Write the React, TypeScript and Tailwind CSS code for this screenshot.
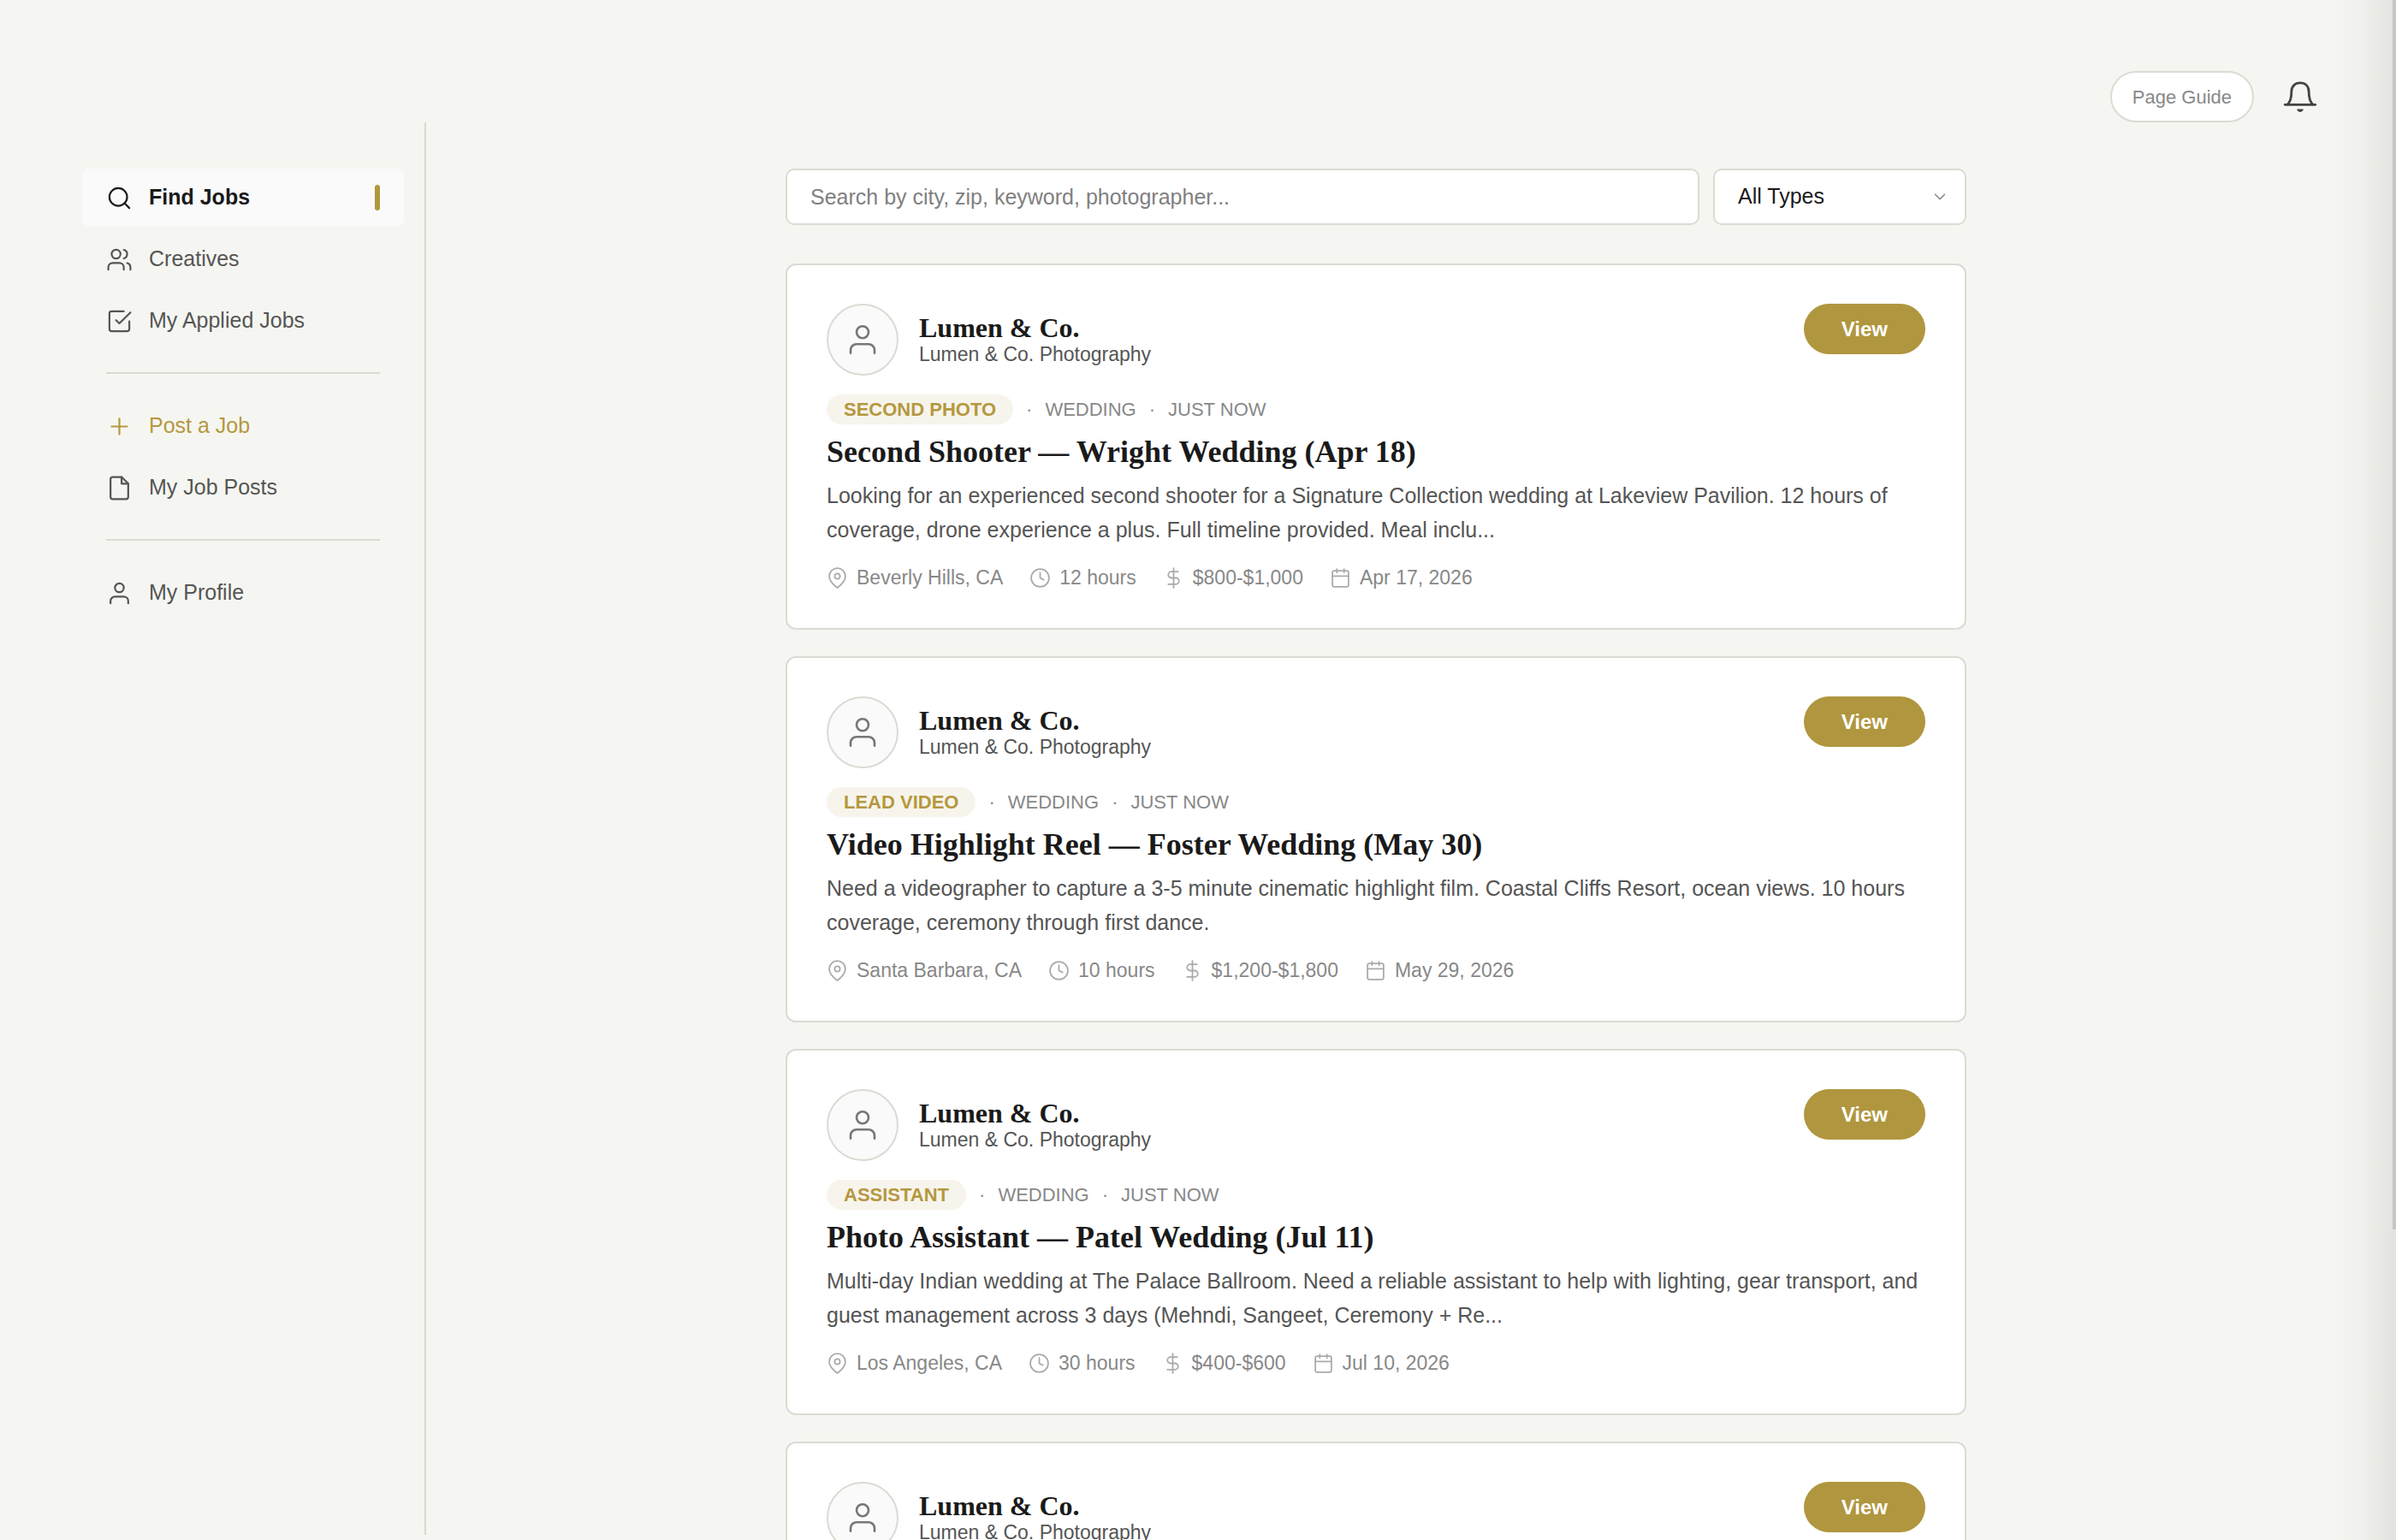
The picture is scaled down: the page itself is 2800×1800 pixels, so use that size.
import type { ReactNode } from 'react';

interface IconProps {
  className?: string;
  strokeWidth?: number;
  children?: ReactNode;
}

function Icon({ className = 'size-[31px]', strokeWidth = 1.7, children }: IconProps) {
  return (
    <svg
      className={`shrink-0 ${className}`}
      viewBox="0 0 24 24"
      fill="none"
      stroke="currentColor"
      strokeWidth={strokeWidth}
      strokeLinecap="round"
      strokeLinejoin="round"
      aria-hidden="true"
    >
      {children}
    </svg>
  );
}

const icons = {
  search: (
    <>
      <circle cx="11" cy="11" r="8" />
      <path d="m21 21-4.3-4.3" />
    </>
  ),
  users: (
    <>
      <path d="M16 21v-2a4 4 0 0 0-4-4H6a4 4 0 0 0-4 4v2" />
      <circle cx="9" cy="7" r="4" />
      <path d="M22 21v-2a4 4 0 0 0-3-3.87M16 3.13a4 4 0 0 1 0 7.75" />
    </>
  ),
  check: (
    <>
      <path d="m9 11 3 3L22 4" />
      <path d="M21 12v7a2 2 0 0 1-2 2H5a2 2 0 0 1-2-2V5a2 2 0 0 1 2-2h11" />
    </>
  ),
  plus: <path d="M12 5v14M5 12h14" />,
  file: (
    <>
      <path d="M14 2H6a2 2 0 0 0-2 2v16a2 2 0 0 0 2 2h12a2 2 0 0 0 2-2V8z" />
      <path d="M14 2v6h6" />
    </>
  ),
  user: (
    <>
      <path d="M20 21v-2a4 4 0 0 0-4-4H8a4 4 0 0 0-4 4v2" />
      <circle cx="12" cy="7" r="4" />
    </>
  ),
  pin: (
    <>
      <path d="M21 10c0 7-9 13-9 13s-9-6-9-13a9 9 0 0 1 18 0z" />
      <circle cx="12" cy="10" r="3" />
    </>
  ),
  clock: (
    <>
      <circle cx="12" cy="12" r="10" />
      <path d="M12 6v6l4 2" />
    </>
  ),
  dollar: <path d="M12 1v22M17 5H9.5a3.5 3.5 0 0 0 0 7h5a3.5 3.5 0 0 1 0 7H6" />,
  calendar: (
    <>
      <rect x="3" y="4" width="18" height="18" rx="2" />
      <path d="M16 2v4M8 2v4M3 10h18" />
    </>
  ),
  bell: (
    <>
      <path d="M3.2 17.4C5.2 15.4 5.9 12.9 5.9 8.7C5.9 4.7 8.3 2.3 12 2.3S18.1 4.7 18.1 8.7C18.1 12.9 18.8 15.4 20.8 17.4" />
      <path d="M1.4 17.6H22.6" />
      <path d="M10.2 21.1H13.8C13.4 21.9 12.8 22.3 12 22.3S10.600 21.900 10.200 21.100Z" fill="currentColor" strokeWidth="0.9" />
    </>
  ),
  chevron: <path d="m6 9 6 6 6-6" />,
};

type IconName = keyof typeof icons;

interface NavItem {
  label: string;
  icon: IconName;
  active?: boolean;
  accent?: boolean;
}

const navGroups: NavItem[][] = [
  [
    { label: 'Find Jobs', icon: 'search', active: true },
    { label: 'Creatives', icon: 'users' },
    { label: 'My Applied Jobs', icon: 'check' },
  ],
  [
    { label: 'Post a Job', icon: 'plus', accent: true },
    { label: 'My Job Posts', icon: 'file' },
  ],
  [{ label: 'My Profile', icon: 'user' }],
];

interface JobDetails {
  role: string;
  title: string;
  description: string;
  location: string;
  hours: string;
  pay: string;
  date: string;
}

interface Job {
  id: number;
  details?: JobDetails;
}

const jobs: Job[] = [
  {
    id: 1,
    details: {
      role: 'SECOND PHOTO',
      title: 'Second Shooter — Wright Wedding (Apr 18)',
      description:
        'Looking for an experienced second shooter for a Signature Collection wedding at Lakeview Pavilion. 12 hours of coverage, drone experience a plus. Full timeline provided. Meal inclu...',
      location: 'Beverly Hills, CA',
      hours: '12 hours',
      pay: '$800-$1,000',
      date: 'Apr 17, 2026',
    },
  },
  {
    id: 2,
    details: {
      role: 'LEAD VIDEO',
      title: 'Video Highlight Reel — Foster Wedding (May 30)',
      description:
        'Need a videographer to capture a 3-5 minute cinematic highlight film. Coastal Cliffs Resort, ocean views. 10 hours coverage, ceremony through first dance.',
      location: 'Santa Barbara, CA',
      hours: '10 hours',
      pay: '$1,200-$1,800',
      date: 'May 29, 2026',
    },
  },
  {
    id: 3,
    details: {
      role: 'ASSISTANT',
      title: 'Photo Assistant — Patel Wedding (Jul 11)',
      description:
        'Multi-day Indian wedding at The Palace Ballroom. Need a reliable assistant to help with lighting, gear transport, and guest management across 3 days (Mehndi, Sangeet, Ceremony + Re...',
      location: 'Los Angeles, CA',
      hours: '30 hours',
      pay: '$400-$600',
      date: 'Jul 10, 2026',
    },
  },
  { id: 4 },
];

function NavLink({ item }: { item: NavItem }) {
  const color = item.active
    ? 'bg-[#fafafa] font-bold text-[#1a1a1a]'
    : item.accent
      ? 'text-[#b5983f]'
      : 'text-[#555]';

  return (
    <a href="#" className={`flex h-[68px] items-center gap-[19px] rounded-lg px-7 text-[25px] ${color}`}>
      <Icon>{icons[item.icon]}</Icon>
      <span className="flex-1">{item.label}</span>
      {/* Active marker */}
      {item.active && <span className="h-[30px] w-1.5 rounded-sm bg-[#b0963e]" />}
    </a>
  );
}

function Sidebar() {
  return (
    <nav className="mb-1.5 w-[498px] shrink-0 border-r-2 border-[#dbd8d1] pt-[54px] pr-6 pl-24">
      {navGroups.map((group, i) => (
        <div key={i}>
          {i > 0 && <hr className="mx-7 mt-[26px] mb-[27px] border-t-2 border-[#dbd8d1]" />}
          <div className="flex flex-col gap-1">
            {group.map((item) => (
              <NavLink key={item.label} item={item} />
            ))}
          </div>
        </div>
      ))}
    </nav>
  );
}

function Meta({ icon, children }: { icon: IconName; children: ReactNode }) {
  return (
    <span className="flex items-center gap-2.5">
      <Icon className="size-[25px] text-[#aaa]">{icons[icon]}</Icon>
      {children}
    </span>
  );
}

function JobBody({ details }: { details: JobDetails }) {
  return (
    <>
      <div className="mt-[22px] flex items-center text-[22px] leading-[35px] text-[#888]">
        <span className="rounded-full bg-[#f7f4ec] px-5 font-bold text-[#b5983f]">{details.role}</span>
        <span className="mx-[15px]">·</span>
        <span>WEDDING</span>
        <span className="mx-[15px]">·</span>
        <span>JUST NOW</span>
      </div>

      <h2 className="mt-3 font-['Liberation_Serif',serif] text-4xl leading-10 font-bold text-[#1a1a1a]">{details.title}</h2>
      <p className="mt-[11px] text-[25px] leading-10 text-[#555]">{details.description}</p>

      <div className="mt-5 flex items-center gap-[31px] text-[23px] leading-8 text-[#888]">
        <Meta icon="pin">{details.location}</Meta>
        <Meta icon="clock">{details.hours}</Meta>
        <Meta icon="dollar">{details.pay}</Meta>
        <Meta icon="calendar">{details.date}</Meta>
      </div>
    </>
  );
}

function JobCard({ job }: { job: Job }) {
  return (
    <article className="rounded-xl border-2 border-[#dddad3] bg-white px-[46px] pt-[45px] pb-[43px]">
      <div className="flex items-start justify-between">
        <div className="flex items-center gap-6">
          <div className="flex size-[84px] items-center justify-center rounded-full border-2 border-[#dddad3] bg-[#fafafa] text-[#777]">
            <Icon className="size-[42px]" strokeWidth={1.5}>{icons.user}</Icon>
          </div>
          <div>
            <p className="font-['Liberation_Serif',serif] text-[32px] leading-[34px] font-bold text-[#1a1a1a]">Lumen & Co.</p>
            <p className="text-[23px] leading-7 text-[#555]">Lumen & Co. Photography</p>
          </div>
        </div>
        <button type="button" className="h-[59px] rounded-full bg-[#b0963e] px-11 text-2xl font-bold text-white">
          View
        </button>
      </div>

      {job.details && <JobBody details={job.details} />}
    </article>
  );
}

export default function App() {
  return (
    <div className="relative flex h-screen flex-col overflow-hidden bg-[#f5f6f1] font-['Liberation_Sans',Arial,sans-serif]">
      <header className="flex h-[143px] shrink-0 items-end justify-end gap-[34px] pr-[92px]">
        <button type="button" className="h-[60px] rounded-full border-2 border-[#dddad3] bg-white px-6 text-[22px] text-[#888]">
          Page Guide
        </button>
        <button type="button" aria-label="Notifications" className="flex h-[60px] items-center text-[#444]">
          <Icon className="size-10">{icons.bell}</Icon>
        </button>
      </header>

      <div className="flex min-h-0 flex-1">
        <Sidebar />
        <main className="flex-1 pt-[54px] pr-[82px]">
          <div className="mx-auto flex max-w-[1380px] flex-col">
            {/* Search and filter */}
            <div className="mb-[45px] flex gap-4">
              <input
                type="text"
                aria-label="Search jobs"
                placeholder="Search by city, zip, keyword, photographer..."
                className="h-[66px] flex-1 rounded-[10px] border-2 border-[#dddad3] bg-white px-[27px] text-[25px] placeholder:text-[#808080]"
              />
              <div className="relative w-[296px]">
                <select
                  aria-label="Job type"
                  className="h-[66px] w-full appearance-none rounded-[10px] border-2 border-[#dddad3] bg-white px-[27px] text-[25px] text-[#1a1a1a]"
                >
                  <option>All Types</option>
                </select>
                <Icon className="pointer-events-none absolute top-[22px] right-5 size-[22px] text-[#888]">{icons.chevron}</Icon>
              </div>
            </div>

            <div className="flex flex-col gap-[31px]">
              {jobs.map((job) => (
                <JobCard key={job.id} job={job} />
              ))}
            </div>
          </div>
        </main>
      </div>

      {/* Edge shade and scrollbar thumb */}
      <div className="pointer-events-none absolute inset-y-0 right-0 w-20 bg-linear-to-r from-transparent via-black/2 to-black/8" />
      <div className="absolute top-0 right-0 h-[1437px] w-1 bg-[#c9c6bf]" />
    </div>
  );
}
